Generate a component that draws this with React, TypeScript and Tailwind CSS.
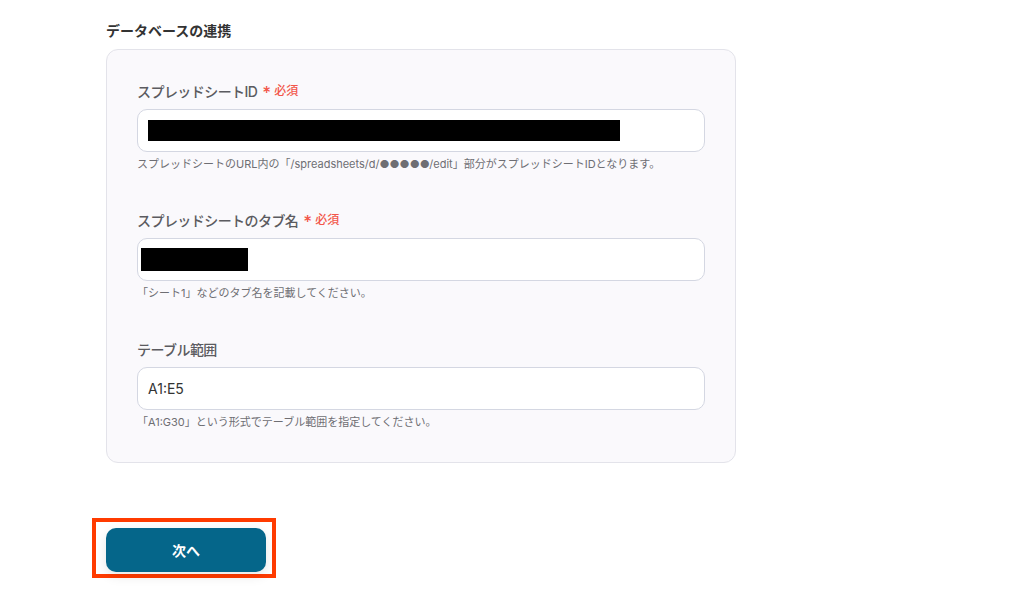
import React from "react";

const font = { fontFamily: 'Inter, "Noto Sans CJK JP", "Noto Sans", sans-serif' };

function Label({ text, required }: { text: string; required?: boolean }) {
  return (
    <div className="flex items-center h-[20px] text-[14px] font-medium text-[#5b5b60] tracking-[-0.04em]">
      <span>{text}</span>
      {required && (
        <span className="ml-[5px] flex items-center text-[#f2564a] text-[12px] font-medium tracking-normal">
          <span className="text-[17px] leading-none mr-[3px] mt-[5px]">*</span>
          必須
        </span>
      )}
    </div>
  );
}

function Input({ children, pl }: { children?: React.ReactNode; pl: string }) {
  return (
    <div className={`mt-[8px] h-[43px] w-full rounded-[10px] border border-[#d4d7e2] bg-white flex items-center ${pl}`}>
      {children}
    </div>
  );
}

function Help({ text }: { text: string }) {
  return <div className="mt-[4px] h-[16px] leading-[16px] text-[11px] text-[#6e6e73]">{text}</div>;
}

export default function App() {
  return (
    <div className="w-[1016px] h-[612px] bg-white overflow-hidden" style={font}>
      <div className="pl-[106px] pt-[21px]">
        <h2 className="text-[14px] leading-[20px] font-bold text-[#333333]">データベースの連携</h2>
        <div className="mt-[8px] w-[630px] h-[414px] rounded-[12px] border border-[#e3e3ea] bg-[#faf9fc] px-[30px] pt-[31px]">
          <Label text="スプレッドシートID" required />
          <Input pl="pl-[10px]">
            <div className="w-[472px] h-[21px] bg-black" />
          </Input>
          <Help text="スプレッドシートのURL内の「/spreadsheets/d/●●●●●/edit」部分がスプレッドシートIDとなります。" />

          <div className="mt-[38px]">
            <Label text="スプレッドシートのタブ名" required />
          </div>
          <Input pl="pl-[3px]">
            <div className="w-[107px] h-[23px] bg-black" />
          </Input>
          <Help text="「シート1」などのタブ名を記載してください。" />

          <div className="mt-[38px]">
            <Label text="テーブル範囲" />
          </div>
          <Input pl="pl-[10px]">
            <span className="text-[14px] text-[#333333]">A1:E5</span>
          </Input>
          <Help text="「A1:G30」という形式でテーブル範囲を指定してください。" />
        </div>

        <div className="mt-[65px] relative w-[160px] h-[44px]">
          <div className="absolute left-[-14px] right-[-10px] top-[-10px] bottom-[-6px] border-[4px] border-[#ff3b00]" />
          <button className="relative w-[160px] h-[44px] rounded-[10px] bg-[#05668a] text-white text-[14px] font-bold shadow-[0_4px_12px_rgba(0,0,0,0.10)]">
            次へ
          </button>
        </div>
      </div>
    </div>
  );
}
